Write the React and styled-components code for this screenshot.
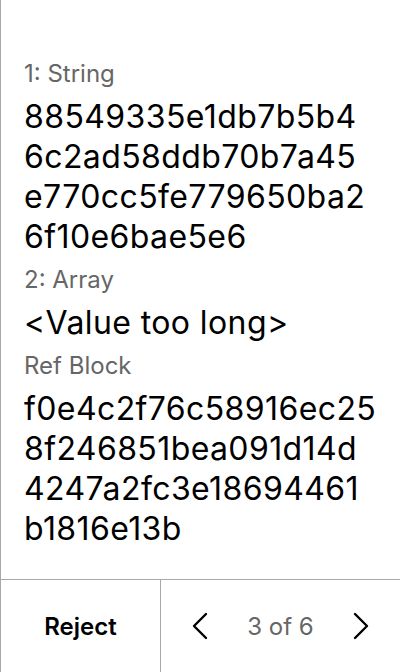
import React from "react";
import styled, { createGlobalStyle } from "styled-components";

const Global = createGlobalStyle`
  html, body { margin: 0; padding: 0; background: #fff; }
  body { font-family: Inter, "Noto Sans", sans-serif; }
  #root { height: 672px; }
`;

const Screen = styled.div`
  box-sizing: border-box;
  width: 400px;
  height: 672px;
  border-left: 1px solid #a8a8a8;
  display: flex;
  flex-direction: column;
  background: #fff;
`;

const Body = styled.div`
  flex: 1;
  padding: 58px 16px 0 23px;
  display: flex;
  flex-direction: column;
  gap: 7px;
  overflow: hidden;
`;

const Item = styled.div`
  display: flex;
  flex-direction: column;
  gap: 7px;
`;

const Label = styled.div`
  font-size: 24px;
  line-height: 32px;
  color: #666;
`;

const Value = styled.div`
  font-size: 32px;
  line-height: 40px;
  letter-spacing: 0.4px;
  color: #000;
  white-space: pre-line;
  word-break: break-all;
`;

const Footer = styled.div`
  height: 92px;
  border-top: 1px solid #a8a8a8;
  display: grid;
  grid-template-columns: 160px 1fr;
`;

const RejectButton = styled.button`
  box-sizing: border-box;
  border: none;
  border-right: 1px solid #a8a8a8;
  background: none;
  font-family: Inter, sans-serif;
  font-size: 24px;
  font-weight: 600;
  color: #000;
  padding: 0;
  cursor: pointer;
`;

const Pager = styled.div`
  display: flex;
  align-items: center;
  justify-content: space-between;
  padding: 0 31px 0 31px;
`;

const Arrow = styled.button`
  border: none;
  background: none;
  padding: 0;
  width: 16px;
  height: 28px;
  display: flex;
  align-items: center;
  justify-content: center;
  color: #000;
`;

const Count = styled.span`
  font-size: 24px;
  color: #666;
`;

const Chevron = ({ dir }) => (
  <svg width="16" height="28" viewBox="0 0 16 28" fill="none">
    <polyline
      points={dir === "left" ? "14,2 2,14 14,26" : "2,2 14,14 2,26"}
      stroke="currentColor"
      strokeWidth="2.4"
      strokeLinecap="round"
      strokeLinejoin="round"
    />
  </svg>
);

const items = [
  {
    label: "1: String",
    lines: ["88549335e1db7b5b4", "6c2ad58ddb70b7a45", "e770cc5fe779650ba2", "6f10e6bae5e6"],
  },
  { label: "2: Array", lines: ["<Value too long>"] },
  {
    label: "Ref Block",
    lines: ["f0e4c2f76c58916ec25", "8f246851bea091d14d", "4247a2fc3e18694461", "b1816e13b"],
  },
];

export default function App() {
  return (
    <>
      <Global />
      <Screen>
        <Body>
          {items.map((it) => (
            <Item key={it.label}>
              <Label>{it.label}</Label>
              <Value>{it.lines.join("\n")}</Value>
            </Item>
          ))}
        </Body>
        <Footer>
          <RejectButton>Reject</RejectButton>
          <Pager>
            <Arrow aria-label="previous"><Chevron dir="left" /></Arrow>
            <Count>3 of 6</Count>
            <Arrow aria-label="next"><Chevron dir="right" /></Arrow>
          </Pager>
        </Footer>
      </Screen>
    </>
  );
}
